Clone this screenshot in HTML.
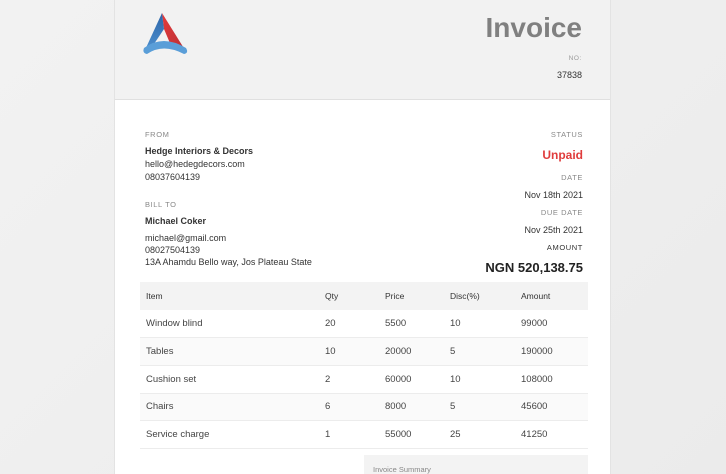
<!DOCTYPE html>
<html><head><meta charset="utf-8"><style>
*{margin:0;padding:0;box-sizing:border-box}
html,body{width:726px;height:474px;overflow:hidden}
body{background:linear-gradient(135deg,#f2f2f2,#ebebeb);font-family:"Liberation Sans",sans-serif;color:#333;position:relative}
.card{position:absolute;left:114px;top:0;width:497px;height:474px;background:#fff;border-left:1px solid #e3e3e3;border-right:1px solid #e3e3e3}
.hdr{position:absolute;left:0;top:0;width:100%;height:100px;background:#f2f2f2;border-bottom:1px solid #e0e0e0}
.a{position:absolute;white-space:nowrap}
.r{text-align:right}
.lbl{font-size:7.5px;color:#888;letter-spacing:.6px}
.t{font-size:9px;color:#333}
table{position:absolute;left:25px;top:282px;width:448px;border-collapse:collapse;font-size:9.5px;color:#444}
td{height:27.7px;border-bottom:1px solid #ececec;padding-left:6px}
tr.h td{background:#f3f3f3;font-size:8.5px;color:#333;height:28px;border:none}
tr:nth-child(odd):not(.h) td{background:#fafafa}
</style></head><body>
<div class="card">
<div class="hdr">
<svg class="a" style="left:24px;top:8px" width="54" height="50" viewBox="0 0 54 50">
<defs><linearGradient id="g1" x1="0" y1="0" x2="1" y2="1"><stop offset="0" stop-color="#e53b3b"/><stop offset="1" stop-color="#b82f35"/></linearGradient>
<linearGradient id="g2" x1="0" y1="0" x2="0" y2="1"><stop offset="0" stop-color="#2d65a8"/><stop offset="1" stop-color="#4d90cf"/></linearGradient></defs>
<path d="M23 5 L46 42 L33 40 L25 21 Z" fill="url(#g1)"/>
<path d="M23 5 L25 21 L15 36 L6 42 Z" fill="url(#g2)"/>
<path d="M5 40 Q24 26 47 40 Q50 45 45 46 Q24 35 8 46 Q3 45 5 40 Z" fill="#5a9ed8"/>
</svg>
<div class="a r" style="right:28px;top:12px;font-size:28px;font-weight:bold;color:#808080">Invoice</div>
<div class="a r lbl" style="right:28px;top:55px;font-size:6.5px;color:#999">NO:</div>
<div class="a r t" style="right:28px;top:70px">37838</div>
</div>
<div class="a lbl" style="left:30px;top:130px">FROM</div>
<div class="a t" style="left:30px;top:146px;font-weight:bold">Hedge Interiors &amp; Decors</div>
<div class="a t" style="left:30px;top:159px">hello@hedegdecors.com</div>
<div class="a t" style="left:30px;top:172px">08037604139</div>
<div class="a lbl" style="left:30px;top:200px">BILL TO</div>
<div class="a t" style="left:30px;top:216px;font-weight:bold">Michael Coker</div>
<div class="a t" style="left:30px;top:233px">michael@gmail.com</div>
<div class="a t" style="left:30px;top:245px">08027504139</div>
<div class="a t" style="left:30px;top:257px">13A Ahamdu Bello way, Jos Plateau State</div>
<div class="a r lbl" style="right:27px;top:130px">STATUS</div>
<div class="a r" style="right:27px;top:148px;font-size:12px;font-weight:bold;color:#e03c3c">Unpaid</div>
<div class="a r lbl" style="right:27px;top:173px">DATE</div>
<div class="a r t" style="right:27px;top:190px">Nov 18th 2021</div>
<div class="a r lbl" style="right:27px;top:208px">DUE DATE</div>
<div class="a r t" style="right:27px;top:225px">Nov 25th 2021</div>
<div class="a r lbl" style="right:27px;top:243px;color:#333">AMOUNT</div>
<div class="a r" style="right:27px;top:260px;font-size:13px;font-weight:bold;color:#222">NGN 520,138.75</div>
<table>
<tr class="h"><td style="width:179px">Item</td><td style="width:60px">Qty</td><td style="width:65px">Price</td><td style="width:71px">Disc(%)</td><td>Amount</td></tr>
<tr><td>Window blind</td><td>20</td><td>5500</td><td>10</td><td>99000</td></tr>
<tr><td>Tables</td><td>10</td><td>20000</td><td>5</td><td>190000</td></tr>
<tr><td>Cushion set</td><td>2</td><td>60000</td><td>10</td><td>108000</td></tr>
<tr><td>Chairs</td><td>6</td><td>8000</td><td>5</td><td>45600</td></tr>
<tr><td>Service charge</td><td>1</td><td>55000</td><td>25</td><td>41250</td></tr>
</table>
<div class="a" style="left:249px;top:455px;width:224px;height:30px;background:#f3f3f3"></div>
<div class="a" style="left:258px;top:465px;font-size:7.5px;color:#888">Invoice Summary</div>
</div>
</body></html>
